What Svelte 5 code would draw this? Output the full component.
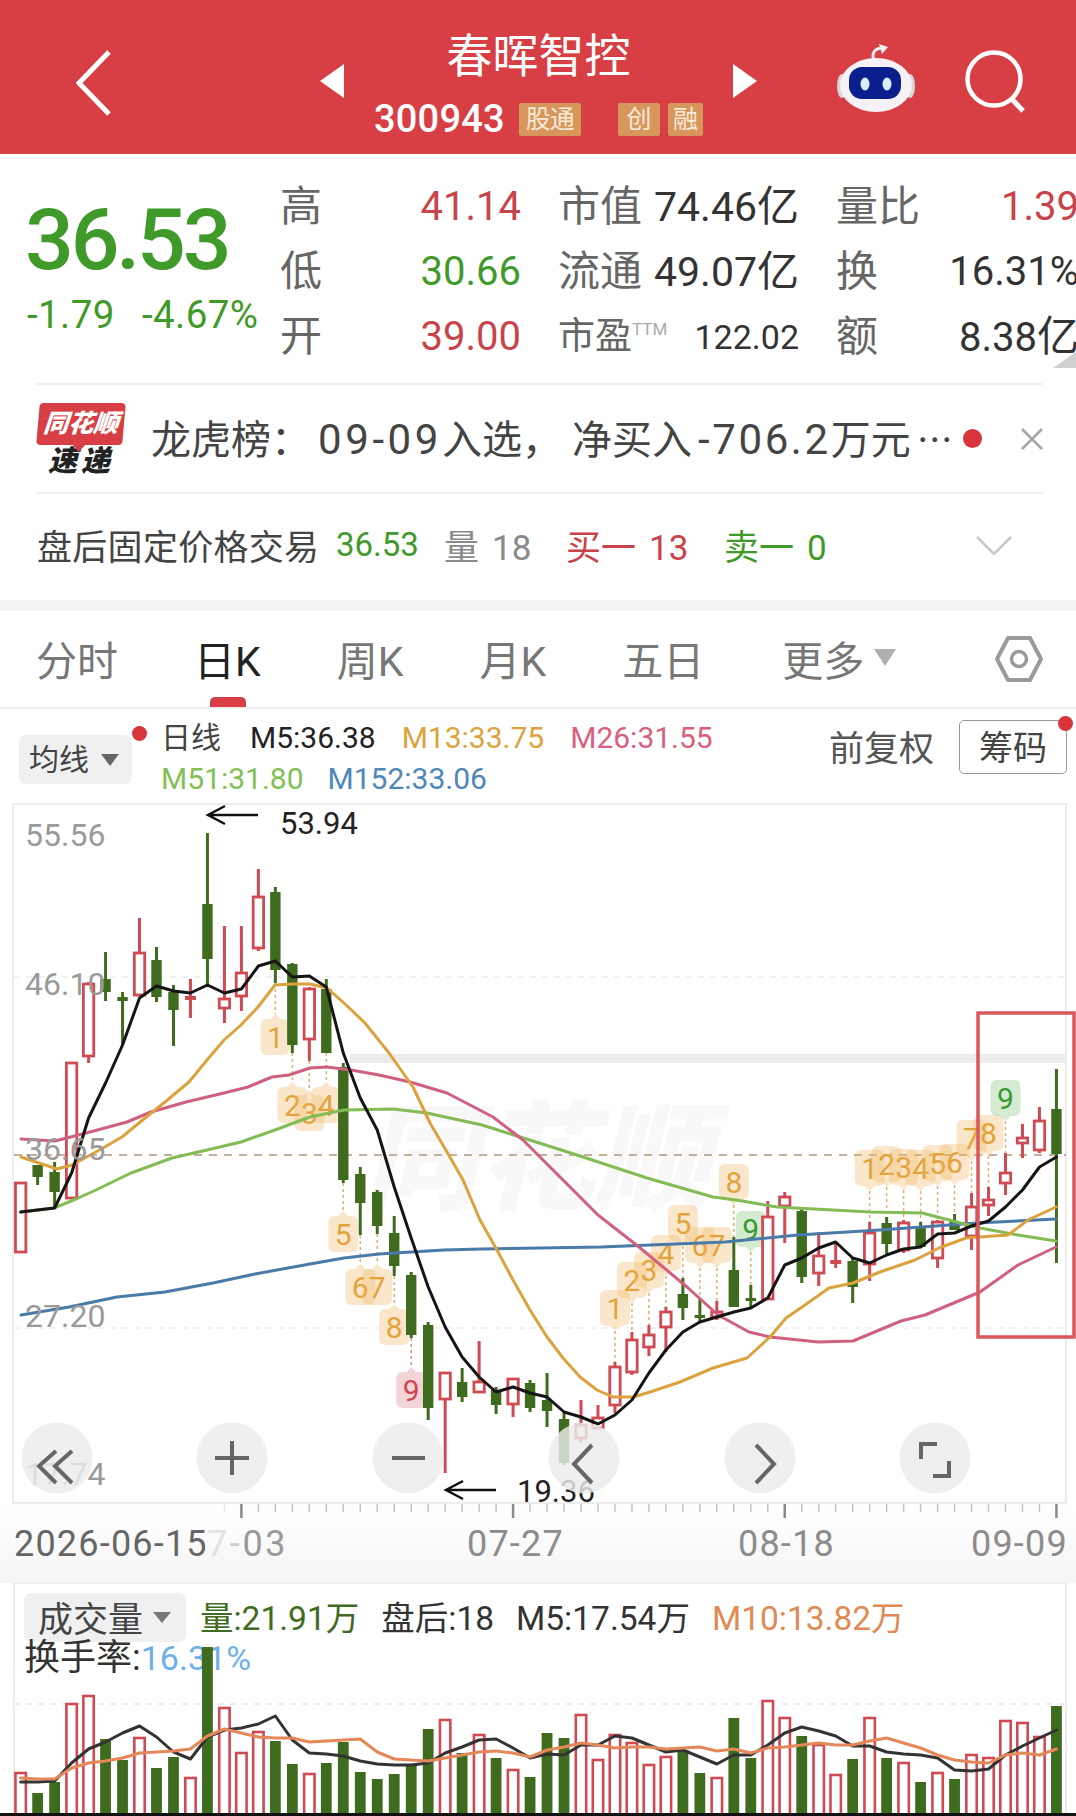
<script>
  const X = (i) => 20.66 + 16.98 * i;
  const RED = '#cf4a52';
  const GREEN = '#3f6b1f';

  // [type, high, bodyTop, bodyBottom, low]
  const candles = [
    ['r',1183,1183,1252,1252],['g',1165,1165,1177,1185],['g',1162,1172,1192,1208],['r',1063,1063,1198,1198],
    ['r',982,984,1056,1063],['g',952,979,992,1001],['g',992,997,1001,1045],['r',918,953,995,995],
    ['g',947,960,997,1002],['g',985,992,1010,1046],['r',979,997,999,1018],['g',833,904,959,985],
    ['r',926,999,1008,1023],['r',926,973,996,1011],['r',869,897,948,951],['g',887,892,970,983],
    ['g',963,964,1045,1053],['r',987,989,1039,1061],['g',979,989,1053,1053],['g',1063,1067,1180,1183],
    ['g',1167,1174,1203,1235],['g',1190,1192,1226,1234],['g',1216,1233,1266,1276],['g',1272,1275,1335,1338],
    ['g',1322,1325,1408,1420],['r',1373,1373,1399,1473],['g',1368,1382,1397,1402],['r',1341,1382,1392,1392],
    ['g',1387,1390,1405,1414],['r',1378,1379,1404,1417],['g',1380,1383,1408,1412],['g',1373,1400,1411,1427],
    ['g',1413,1419,1463,1465],['r',1400,1425,1438,1443],['r',1405,1418,1428,1428],['r',1362,1367,1405,1413],
    ['r',1332,1340,1372,1375],['r',1325,1335,1347,1356],['r',1307,1312,1327,1352],['g',1278,1294,1308,1320],
    ['g',1298,1315,1317,1323],['r',1301,1312,1317,1320],['g',1237,1270,1307,1307],['g',1285,1298,1300,1307],
    ['r',1201,1217,1299,1299],['r',1192,1197,1206,1243],['g',1209,1211,1277,1283],['r',1232,1256,1273,1286],
    ['r',1242,1261,1263,1268],['g',1258,1261,1287,1303],['r',1222,1233,1264,1281],['g',1217,1223,1244,1254],
    ['r',1220,1223,1250,1253],['g',1222,1228,1247,1247],['r',1220,1222,1258,1268],['g',1214,1222,1230,1230],
    ['r',1193,1207,1236,1250],['r',1187,1200,1205,1216],['r',1153,1173,1183,1195],['r',1124,1138,1143,1158],
    ['r',1107,1121,1150,1153],['g',1069,1109,1154,1263],
  ];

  const ma5 = [1212,1210,1208,1173,1118,1083,1045,998,986,991,993,985,993,989,966,961,977,976,987,1053,1098,1130,1187,1238,1287,1327,1357,1377,1392,1387,1393,1397,1412,1417,1424,1415,1400,1373,1350,1332,1322,1317,1312,1308,1298,1265,1258,1248,1242,1258,1263,1255,1249,1247,1234,1233,1226,1221,1207,1190,1167,1157]
    .map((y, i) => `${X(i)},${y}`).join(' ');
  const m13 = '21,1157 57,1169 72,1165 103,1148 122,1137 145,1118 165,1102 189,1082 207,1060 224,1040 241,1025 258,1007 275,985 293,984 310,984 327,988 344,1003 365,1023 389,1053 413,1087 430,1123 447,1152 463,1180 480,1220 497,1250 513,1280 530,1310 547,1337 563,1358 580,1377 597,1390 613,1397 633,1397 647,1393 680,1382 713,1368 747,1358 770,1337 786,1318 805,1305 829,1288 853,1283 880,1272 915,1260 939,1248 966,1238 1008,1235 1028,1220 1056,1207';
  const m26 = '21,1139 55,1141 90,1132 127,1122 151,1112 186,1102 224,1093 248,1087 272,1077 289,1075 310,1068 327,1067 351,1070 379,1075 410,1082 447,1093 493,1117 523,1140 560,1177 598,1215 639,1247 687,1287 718,1315 749,1332 770,1337 818,1342 853,1341 901,1321 925,1315 980,1292 1018,1265 1056,1247';
  const m51 = '21,1212 54,1208 76,1199 96,1190 131,1173 172,1158 207,1150 241,1142 275,1130 310,1117 344,1110 393,1109 427,1113 482,1125 536,1142 577,1155 647,1178 713,1197 736,1200 777,1207 870,1212 922,1213 949,1220 980,1228 1018,1235 1056,1241';
  const m152 = '21,1315 69,1307 117,1297 165,1292 213,1283 255,1274 310,1264 344,1258 379,1254 444,1250 482,1249 540,1248 601,1247 725,1242 798,1235 880,1230 977,1223 1056,1219';

  // [candle index, label, tag centre y, kind, above] - kind: o orange, p red, t green; above = tip points down
  const tags = [
    [15,'1',1037,'o',false],[16,'2',1105,'o',false],[17,'3',1113,'o',false],[18,'4',1105,'o',false],
    [19,'5',1234,'o',false],[20,'6',1287,'o',false],[21,'7',1287,'o',false],[22,'8',1327,'o',false],[23,'9',1390,'p',false],
    [35,'1',1308,'o',true],[36,'2',1280,'o',true],[37,'3',1270,'o',true],[38,'4',1253,'o',true],[39,'5',1223,'o',true],
    [40,'6',1245,'o',true],[41,'7',1245,'o',true],[42,'8',1182,'o',true],[43,'9',1229,'t',true],
    [50,'1',1168,'o',true],[51,'2',1164,'o',true],[52,'3',1167,'o',true],[53,'4',1168,'o',true],[54,'5',1163,'o',true],
    [55,'6',1162,'o',true],[56,'7',1138,'o',true],[57,'8',1133,'o',true],[58,'9',1098,'t',true],
  ];

  const tagFill = { o: '#f0b45c', p: '#dc7c84', t: '#7cc070' };
  const tagText = { o: '#e3a33c', p: '#d0454e', t: '#3a9a32' };

  const tagPath = (x, cy, above) => {
    const l = x - 15, r = x + 15, t = cy - 18, b = cy + 18, c = 7;
    if (above) {
      return `M${l + c} ${t}H${r - c}Q${r} ${t} ${r} ${t + c}V${b - c}Q${r} ${b} ${r - c} ${b}H${x + 5}L${x} ${b + 5}L${x - 5} ${b}H${l + c}Q${l} ${b} ${l} ${b - c}V${t + c}Q${l} ${t} ${l + c} ${t}Z`;
    }
    return `M${l + c} ${t}H${x - 5}L${x} ${t - 5}L${x + 5} ${t}H${r - c}Q${r} ${t} ${r} ${t + c}V${b - c}Q${r} ${b} ${r - c} ${b}H${l + c}Q${l} ${b} ${l} ${b - c}V${t + c}Q${l} ${t} ${l + c} ${t}Z`;
  };

  const ticks = [];
  for (let i = 12; i < 62; i++) ticks.push(i);

  const vols = [1773,1793,1782,1704,1696,1739,1760,1738,1768,1757,1778,1647,1708,1753,1732,1741,1764,1774,1763,1742,1772,1779,1774,1765,1729,1720,1753,1735,1758,1770,1777,1733,1738,1715,1760,1735,1743,1765,1757,1750,1773,1778,1718,1758,1701,1718,1736,1745,1775,1759,1718,1758,1763,1782,1773,1779,1755,1758,1721,1723,1737,1706];
  // colour of each volume bar, read off the reference
  const volRed = new Set([0,3,4,7,10,12,13,14,17,25,27,29,33,34,35,36,37,38,41,44,45,47,48,50,52,54,56,57,58,59,60]);

  const volM5 = [1782,1782,1781,1763,1749,1742,1733,1726,1737,1752,1759,1737,1730,1728,1724,1716,1740,1753,1754,1756,1761,1764,1765,1765,1763,1753,1747,1740,1739,1748,1758,1754,1755,1745,1745,1736,1738,1745,1752,1750,1757,1764,1755,1755,1745,1733,1727,1731,1736,1746,1746,1752,1754,1755,1758,1770,1771,1769,1755,1746,1738,1730]
    .map((y, i) => `${X(i)},${y}`).join(' ');
  const volM10 = [1778,1779,1779,1768,1763,1761,1758,1753,1752,1751,1749,1736,1729,1733,1737,1738,1738,1742,1741,1740,1739,1752,1759,1760,1761,1758,1755,1752,1751,1753,1757,1750,1747,1743,1745,1748,1747,1747,1749,1748,1747,1751,1749,1753,1748,1747,1745,1743,1745,1745,1741,1738,1743,1748,1755,1760,1762,1763,1755,1753,1755,1749]
    .map((y, i) => `${X(i)},${y}`).join(' ');

  const rows = [
    { k: '高', v: '41.14', c: 'red', k2: '市值', v2: '74.46', u2: '亿', k3: '量比', v3: '1.39', c3: 'red' },
    { k: '低', v: '30.66', c: 'green', k2: '流通', v2: '49.07', u2: '亿', k3: '换', v3: '16.31%', c3: 'dark' },
  ];
</script>

<div class="page">
  <header class="top">
    <div class="top-left">
      <svg width="36" height="66" viewBox="0 0 36 66"><path d="M33 2 3 33l30 31" fill="none" stroke="#fff" stroke-width="5"/></svg>
    </div>
    <div class="top-mid">
      <span class="tri tri-l"></span>
      <div class="titles">
        <div class="name">春晖智控</div>
        <div class="code">
          <span class="num">300943</span>
          <span class="badge wide">股通</span>
          <span class="badge b-chuang">创</span>
          <span class="badge b-rong">融</span>
        </div>
      </div>
      <span class="tri tri-r"></span>
    </div>
    <div class="top-right">
      <svg class="robot" width="78" height="70" viewBox="0 0 78 70">
        <path d="M37 17c-3-7 1-12 9-12" fill="none" stroke="#f3eeee" stroke-width="3"/>
        <path d="M42 1l9 3-6 7z" fill="#f3eeee"/>
        <ellipse cx="5" cy="43" rx="5" ry="12" fill="#d9d6da"/>
        <ellipse cx="73" cy="43" rx="5" ry="12" fill="#d9d6da"/>
        <ellipse cx="39" cy="42" rx="36" ry="27" fill="#f4f2f5"/>
        <rect x="12" y="24" width="52" height="32" rx="13" fill="#0a1f8c"/>
        <ellipse cx="28" cy="41" rx="4.5" ry="6.5" fill="#d8ecfb"/>
        <ellipse cx="50" cy="41" rx="4.5" ry="6.5" fill="#d8ecfb"/>
      </svg>
      <svg width="62" height="64" viewBox="0 0 62 64">
        <circle cx="29" cy="29" r="26.5" fill="none" stroke="#fff" stroke-width="4.5"/>
        <path d="M46 48l12 13" stroke="#fff" stroke-width="5" fill="none"/>
      </svg>
    </div>
  </header>

  <section class="quote">
    <div class="price">
      <div class="big">36.53</div>
      <div class="change"><span class="chg">-1.79</span><span>-4.67%</span></div>
    </div>
    <div class="table">
      {#each rows as r}
        <div class="cell"><span class="k">{r.k}</span><span class="v {r.c}">{r.v}</span></div>
        <div class="cell mid"><span class="k">{r.k2}</span><span class="v dark">{r.v2}<i>{r.u2}</i></span></div>
        <div class="cell"><span class="k">{r.k3}</span><span class="v {r.c3}">{r.v3}</span></div>
      {/each}
      <div class="cell"><span class="k">开</span><span class="v red">39.00</span></div>
      <div class="cell mid"><span class="k small">市盈<sup>TTM</sup></span><span class="v dark pe">122.02</span></div>
      <div class="cell"><span class="k">额</span><span class="v dark">8.38<i>亿</i></span></div>
    </div>
    <span class="corner"></span>
  </section>

  <section class="news">
    <div class="logo">
      <div class="bubble">同花顺</div>
      <div class="express">速递</div>
    </div>
    <div class="headline">龙虎榜：<span class="d d1">09-09</span>入选，<span class="next">净买入</span><span class="d d2">-706.2</span>万元<span class="dots">…</span></div>
    <span class="news-dot"></span>
    <svg class="close" width="24" height="22" viewBox="0 0 24 22"><path d="M2 1l20 20M22 1 2 21" stroke="#a5a5a5" stroke-width="2.5" fill="none"/></svg>
  </section>

  <section class="after">
    <span class="after-title">盘后固定价格交易</span>
    <span class="a-green a-price">36.53</span>
    <span class="a-gray a-qty">量<b>18</b></span>
    <span class="a-red a-buy">买一<b>13</b></span>
    <span class="a-green a-sell">卖一<b>0</b></span>
    <svg class="chev" width="36" height="20" viewBox="0 0 36 20"><path d="M1 1l17 17L35 1" fill="none" stroke="#c8c8c8" stroke-width="2.5"/></svg>
  </section>

  <div class="sep"></div>

  <nav class="tabs">
    <span class="tab">分时</span>
    <span class="tab active">日K</span>
    <span class="tab">周K</span>
    <span class="tab">月K</span>
    <span class="tab">五日</span>
    <span class="tab more">更多<em></em></span>
    <svg class="hex" width="50" height="48" viewBox="0 0 50 48">
      <path d="M14 3h22l11 21-11 21H14L3 24z" fill="none" stroke="#9a9a9a" stroke-width="4" stroke-linejoin="round"/>
      <circle cx="25" cy="24" r="7.5" fill="none" stroke="#9a9a9a" stroke-width="3.5"/>
    </svg>
  </nav>

  <section class="legend">
    <div class="ma-btn">均线<em></em></div>
    <span class="legend-dot"></span>
    <div class="ma-lines">
      <div class="ma-row">
        <span class="ma-name">日线</span>
        <span class="c-k">M5:36.38</span>
        <span class="c-o">M13:33.75</span>
        <span class="c-p">M26:31.55</span>
      </div>
      <div class="ma-row row-two">
        <span class="c-g">M51:31.80</span>
        <span class="c-b">M152:33.06</span>
      </div>
    </div>
    <span class="adjust">前复权</span>
    <div class="chips">筹码<span class="chips-dot"></span></div>
  </section>

  <svg class="chart" width="1076" height="780" viewBox="0 803 1076 780">
    <defs>
      <linearGradient id="axisBg" x1="0" y1="0" x2="0" y2="1">
        <stop offset="0" stop-color="#fff"/>
        <stop offset="1" stop-color="#f5f5f5"/>
      </linearGradient>
    </defs>

    <rect x="0" y="1503" width="1076" height="80" fill="url(#axisBg)"/>
    <rect x="13" y="804" width="1053" height="699" fill="#fff" stroke="#ececec" stroke-width="2"/>

    <rect x="350" y="1054" width="716" height="9" fill="#ececec"/>
    <text class="mark" x="362" y="1200">同花顺</text>

    <path d="M14 977H1066M14 1328H1066" stroke="#eeeeee" stroke-width="1.5" stroke-dasharray="6 6"/>
    <path d="M14 1155H1066" stroke="#c4b09a" stroke-width="2" stroke-dasharray="8 7"/>

    {#each tags as [i, label, cy, kind, above]}
      <path d={above ? `M${X(i)} ${cy + 23}V${candles[i][1]}` : `M${X(i)} ${candles[i][4]}V${cy - 23}`}
        stroke={kind === 'p' ? '#d89098' : '#dcb272'} stroke-width="1.5" stroke-dasharray="3 3"/>
      <path d={tagPath(X(i), cy, above)} fill={tagFill[kind]} opacity="0.32"/>
      <text class="tag" x={X(i)} y={cy + 11} fill={tagText[kind]}>{label}</text>
    {/each}

    {#each candles as [type, high, top, bottom, low], i}
      {#if type === 'g'}
        <path d="M{X(i)} {high}V{low}" stroke={GREEN} stroke-width="3"/>
        <rect x={X(i) - 5.2} y={top} width="10.4" height={Math.max(bottom - top, 3)} fill={GREEN}/>
      {:else}
        <path d="M{X(i)} {high}V{top}M{X(i)} {bottom}V{low}" stroke={RED} stroke-width="3"/>
        {#if bottom - top < 5}
          <rect x={X(i) - 5.5} y={top - 1} width="11" height="4" fill={RED}/>
        {:else}
          <rect x={X(i) - 5.2} y={top} width="10.4" height={bottom - top} fill="#fff" stroke={RED} stroke-width="2.8"/>
        {/if}
      {/if}
    {/each}

    <polyline points={m152} class="ma" stroke="#4a7aa8"/>
    <polyline points={m51} class="ma" stroke="#83bb55"/>
    <polyline points={m26} class="ma" stroke="#d0607f"/>
    <polyline points={m13} class="ma" stroke="#dca23d"/>
    <polyline points={ma5} class="ma" stroke="#151515"/>

    <text class="axis" x="25" y="846">55.56</text>
    <text class="axis" x="25" y="995">46.10</text>
    <text class="axis" x="25" y="1160">36.65</text>
    <text class="axis" x="25" y="1327">27.20</text>
    <text class="axis" x="25" y="1485">17.74</text>

    <path d="M258 815H208M225 806 208 815 225 824" fill="none" stroke="#111" stroke-width="2.5"/>
    <text class="extreme" x="280" y="834">53.94</text>
    <path d="M496 1490H446M463 1481 446 1490 463 1499" fill="none" stroke="#111" stroke-width="2.5"/>
    <text class="extreme" x="517" y="1502">19.36</text>

    <path d="M978 1013H1074V1337H978Z" fill="none" stroke="#d9575e" stroke-width="3.5"/>

    {#each [57, 232, 408, 584, 760, 935] as cx}
      <circle {cx} cy="1458" r="35.5" fill="#ebebeb" opacity="0.82"/>
    {/each}
    <g fill="none" stroke="#666" stroke-width="4">
      <path d="M56 1451 39 1466 56 1483M72 1451 55 1466 72 1483"/>
      <path d="M232 1441V1475M215 1458H249"/>
      <path d="M392 1458H425"/>
      <path d="M592 1445 574 1464 592 1483"/>
      <path d="M756 1445 774 1464 756 1483"/>
      <path d="M921 1459V1444H937M949 1461V1476H933"/>
    </g>

    {#each ticks as i}
      <path d="M{X(i)} 1504V{(i - 13) % 16 === 0 ? 1518 : 1512}"
        stroke={(i - 13) % 16 === 0 ? '#8a8a8a' : i < 13 ? '#e8e8e8' : '#c4c4c4'}
        stroke-width={(i - 13) % 16 === 0 ? 2.5 : 1.5}/>
    {/each}
    <text class="date" x="14" y="1556" fill="#666">2026-06-15</text>
    <text class="date faded" x="207" y="1556"><tspan fill="#e2e2e2">7</tspan><tspan fill="#ccc">-</tspan><tspan fill="#999">03</tspan></text>
    <text class="date" x="467" y="1556" fill="#8c8c8c">07-27</text>
    <text class="date" x="738" y="1556" fill="#8c8c8c">08-18</text>
    <text class="date" x="971" y="1556" fill="#8c8c8c">09-09</text>
  </svg>

  <section class="vol">
    <div class="vol-row">
      <div class="vol-btn"><span>成交量</span><em></em></div>
      <span class="v-green">量:21.91万</span>
      <span class="v-dark">盘后:18</span>
      <span class="v-dark">M5:17.54万</span>
      <span class="v-orange">M10:13.82万</span>
    </div>
    <div class="turnover">换手率:<span>16.31%</span></div>
    <svg class="vol-chart" width="1076" height="230" viewBox="0 1583 1076 230">
      <path d="M13 1583H1067M14 1583V1813M1066 1583V1813" fill="none" stroke="#ececec" stroke-width="2"/>
      <path d="M14 1704H1066" stroke="#e6e6e6" stroke-width="1.5" stroke-dasharray="6 6"/>
      {#each vols as y, i}
        {#if volRed.has(i)}
          <rect x={X(i) - 5.2} {y} width="10.4" height={1816 - y} fill="#fff" stroke={RED} stroke-width="2.6"/>
        {:else}
          <rect x={X(i) - 5.4} {y} width="10.8" height={1813 - y} fill={GREEN}/>
        {/if}
      {/each}
      <polyline points={volM5} class="ma" stroke="#333" stroke-width="2.5"/>
      <polyline points={volM10} class="ma" stroke="#e4885a" stroke-width="2.5"/>
    </svg>
  </section>
  <div class="base"></div>
</div>

<style>
  :global(body) {
    margin: 0;
    background: #fff;
  }

  .page {
    width: 1076px;
    height: 1816px;
    overflow: hidden;
    position: relative;
    background: #fff;
    font-family: Roboto, "Noto Sans CJK SC", sans-serif;
    color: #333;
  }

  /* header */
  .top {
    height: 154px;
    background: #d83f45;
    display: grid;
    grid-template-columns: 1fr auto 1fr;
    align-items: center;
    color: #fff;
  }

  .top-left {
    padding: 0 0 0 76px;
    height: 66px;
    margin-top: 12px;
  }

  .top-mid {
    display: flex;
    align-items: center;
    gap: 30px;
    margin-left: 1px;
  }

  .tri {
    width: 0;
    height: 0;
    border-top: 17px solid transparent;
    border-bottom: 17px solid transparent;
    margin-top: 8px;
  }

  .tri-l {
    border-right: 24px solid #fff;
  }

  .tri-r {
    border-left: 24px solid #fff;
  }

  .titles {
    width: 329px;
    text-align: center;
  }

  .name {
    font-size: 46px;
    line-height: 56px;
    margin-top: 11px;
  }

  .code {
    display: flex;
    align-items: center;
    height: 36px;
    margin-top: 17px;
    font-size: 38px;
    font-weight: 500;
  }

  .code .num {
    margin-right: 14px;
    letter-spacing: 0.2px;
  }

  .badge {
    background: #d7965c;
    color: #f7ead9;
    font-size: 25px;
    font-weight: 400;
    height: 33px;
    line-height: 33px;
    width: 44px;
    text-align: center;
    border-radius: 2px;
  }

  .wide {
    width: 64px;
    letter-spacing: -1px;
  }

  .b-chuang {
    margin-left: 37px;
  }

  .b-rong {
    margin-left: 8px;
    width: 36px;
  }

  .top-right {
    display: flex;
    align-items: center;
    padding-left: 80px;
    gap: 50px;
    margin-top: 10px;
  }

  .robot {
    margin-top: -8px;
  }

  /* quote */
  .quote {
    display: flex;
    height: 229px;
    padding-left: 27px;
    position: relative;
  }

  .price {
    width: 253px;
    padding-top: 41px;
    box-sizing: border-box;
    flex: none;
  }

  .big {
    font-size: 86px;
    line-height: 90px;
    font-weight: 500;
    color: #3f9a2a;
    letter-spacing: -3.2px;
    margin-left: -2px;
  }

  .change {
    display: flex;
    font-size: 38.5px;
    line-height: 40px;
    color: #3f9a2a;
    margin-top: 10px;
    white-space: nowrap;
    letter-spacing: 0.4px;
  }

  .chg {
    width: 115px;
    flex: none;
  }

  .table {
    display: grid;
    grid-template-columns: 241px 241px 243px;
    column-gap: 37px;
    grid-auto-rows: 65px;
    padding-top: 20px;
  }

  .cell {
    display: flex;
    justify-content: space-between;
    align-items: center;
    white-space: nowrap;
  }

  .mid {
    justify-content: flex-start;
  }

  .k {
    font-size: 42px;
    color: #666;
    line-height: 1;
  }

  .k.small {
    font-size: 37px;
    width: 138px;
  }

  .k sup {
    font-size: 17px;
    color: #aaa;
    vertical-align: 14px;
    line-height: 0;
  }

  .v {
    font-size: 40px;
    line-height: 1;
  }

  .mid .k {
    margin-right: 12px;
  }

  .mid .v {
    font-size: 41px;
  }

  .mid .k.small {
    margin-right: 0;
  }

  .v i {
    font-style: normal;
    font-size: 42px;
  }

  .mid .v.pe {
    font-size: 34px;
  }

  .red {
    color: #c8434a;
  }

  .green {
    color: #3f9a2a;
  }

  .dark {
    color: #333;
  }

  .corner {
    position: absolute;
    right: 0;
    top: 198px;
    width: 0;
    height: 0;
    border-left: 23px solid transparent;
    border-bottom: 16px solid #d0d0d0;
  }

  /* news */
  .news {
    height: 107px;
    margin: 0 33px 0 36px;
    border-top: 2px solid #f0f0f0;
    border-bottom: 2px solid #f0f0f0;
    display: flex;
    align-items: center;
    box-sizing: content-box;
  }

  .logo {
    width: 92px;
    margin-left: 2px;
    flex: none;
    text-align: center;
    margin-top: 2px;
  }

  .bubble {
    background: #d83f45;
    color: #fff;
    font-size: 25px;
    line-height: 42px;
    height: 42px;
    width: 86px;
    font-weight: 900;
    font-style: italic;
    border-radius: 4px;
    transform: skewX(-5deg);
    position: relative;
    white-space: nowrap;
  }

  .bubble::after {
    content: "";
    position: absolute;
    left: 36px;
    bottom: -7px;
    border-left: 7px solid transparent;
    border-right: 7px solid transparent;
    border-top: 8px solid #d83f45;
  }

  .express {
    font-size: 29px;
    line-height: 30px;
    font-weight: 900;
    font-style: italic;
    color: #222;
    letter-spacing: 4px;
    margin-top: 1px;
    width: 86px;
    white-space: nowrap;
  }

  .headline {
    font-size: 40px;
    color: #444;
    margin-left: 21px;
    white-space: nowrap;
    width: 813px;
    flex: none;
    line-height: 1;
    margin-top: 2px;
  }

  .headline .d {
    font-size: 42px;
  }

  .d1 {
    letter-spacing: 3.6px;
    margin-left: 7px;
  }

  .next {
    margin-left: 10px;
  }

  .d2 {
    letter-spacing: 2.6px;
    margin-left: 6px;
  }

  .dots {
    font-family: "Noto Sans CJK SC", sans-serif;
    font-size: 36px;
    margin-left: 6px;
  }

  .news-dot {
    width: 19px;
    height: 19px;
    border-radius: 50%;
    background: #d8343c;
    flex: none;
    margin-left: -1px;
  }

  .close {
    margin-left: auto;
    margin-right: -1px;
  }

  /* after hours */
  .after {
    height: 106px;
    display: flex;
    align-items: center;
    padding-left: 37px;
    padding-bottom: 6px;
    box-sizing: border-box;
    font-size: 35px;
    white-space: nowrap;
  }

  .after b {
    font-weight: 400;
    margin-left: 13px;
  }

  .after-title {
    color: #444;
    width: 299px;
    flex: none;
    letter-spacing: 0.3px;
  }

  .a-green {
    color: #3f9a2a;
  }

  .a-red {
    color: #c8434a;
  }

  .a-gray {
    color: #8a8a8a;
  }

  .a-price {
    width: 108px;
    flex: none;
    font-size: 33px;
  }

  .a-qty {
    width: 122px;
    flex: none;
  }

  .a-buy {
    width: 158px;
    flex: none;
  }

  .chev {
    margin-left: auto;
    margin-right: 64px;
    margin-top: 3px;
  }

  .sep {
    height: 11px;
    background: #f3f3f3;
  }

  /* tabs */
  .tabs {
    height: 96px;
    border-bottom: 2px solid #f0f0f0;
    display: flex;
    align-items: center;
    padding-left: 36px;
    gap: 76px;
    font-size: 41px;
    color: #777;
    position: relative;
  }

  .tab {
    position: relative;
    height: 96px;
    line-height: 103px;
    white-space: nowrap;
  }

  .active {
    color: #222;
  }

  .active::after {
    content: "";
    position: absolute;
    left: 16px;
    width: 36px;
    height: 10px;
    bottom: 0;
    background: #d83f45;
    border-radius: 5px 5px 0 0;
  }

  .more {
    display: flex;
    align-items: center;
    padding-top: 7px;
    box-sizing: border-box;
    margin-left: 2px;
  }

  .more em {
    width: 0;
    height: 0;
    margin-left: 10px;
    margin-top: -10px;
    border-left: 11px solid transparent;
    border-right: 11px solid transparent;
    border-top: 17px solid #b0b0b0;
  }

  .hex {
    margin-left: auto;
    margin-right: 32px;
  }

  /* legend */
  .legend {
    height: 94px;
    display: flex;
    align-items: flex-start;
    font-size: 30px;
    white-space: nowrap;
  }

  .ma-btn {
    margin: 26px 0 0 19px;
    width: 113px;
    height: 49px;
    line-height: 49px;
    background: #f0f0f0;
    border-radius: 7px;
    padding-left: 10px;
    box-sizing: border-box;
    display: flex;
    align-items: center;
    color: #444;
  }

  .ma-btn em {
    width: 0;
    height: 0;
    margin-left: 12px;
    border-left: 9px solid transparent;
    border-right: 9px solid transparent;
    border-top: 12px solid #666;
  }

  .legend-dot {
    width: 15px;
    height: 15px;
    border-radius: 50%;
    background: #d8343c;
    margin: 17px 0 0 0;
    flex: none;
  }

  .ma-lines {
    margin-left: 14px;
    margin-top: 8px;
  }

  .ma-row {
    display: flex;
    gap: 26px;
    height: 41px;
    line-height: 41px;
  }

  .row-two {
    gap: 24px;
  }

  .ma-name {
    color: #444;
    margin-right: 3px;
  }

  .c-k {
    color: #222;
  }

  .c-o {
    color: #dca23d;
  }

  .c-p {
    color: #d8607e;
  }

  .c-g {
    color: #82bf55;
  }

  .c-b {
    color: #4f87b8;
  }

  .adjust {
    font-size: 35px;
    line-height: 44px;
    margin: 19px 0 0 auto;
    color: #555;
  }

  .chips {
    width: 108px;
    height: 54px;
    margin: 11px 9px 0 25px;
    box-sizing: border-box;
    border: 1.5px solid #999;
    border-radius: 5px;
    text-align: center;
    line-height: 54px;
    font-size: 34px;
    color: #444;
    position: relative;
  }

  .chips-dot {
    position: absolute;
    right: -7px;
    top: -5px;
    width: 15px;
    height: 15px;
    border-radius: 50%;
    background: #d8343c;
  }

  /* charts */
  .chart {
    display: block;
  }

  .ma {
    fill: none;
    stroke-width: 3;
    stroke-linejoin: round;
    stroke-linecap: round;
  }

  .mark {
    font-size: 116px;
    font-weight: 900;
    font-style: italic;
    fill: #f8f8f8;
  }

  .tag {
    font-size: 30px;
    text-anchor: middle;
  }

  .axis {
    font-size: 32px;
    fill: #9a9a9a;
  }

  .extreme {
    font-size: 31px;
    fill: #222;
  }

  .date {
    font-size: 36px;
    letter-spacing: 1.2px;
  }

  .faded {
    letter-spacing: 2.6px;
  }

  /* volume */
  .vol {
    height: 230px;
    position: relative;
    padding: 10px 0 0 24px;
    box-sizing: border-box;
    font-size: 33.5px;
    white-space: nowrap;
  }

  .vol-row {
    display: flex;
    align-items: center;
    height: 49px;
    gap: 22px;
  }

  .vol-row > span {
    padding-bottom: 4px;
  }

  .vol-btn {
    width: 162px;
    height: 49px;
    background: #f0f0f0;
    border-radius: 7px;
    padding-left: 14px;
    box-sizing: border-box;
    display: flex;
    align-items: center;
    color: #444;
    margin-right: -8px;
    font-size: 35px;
  }

  .vol-btn span {
    padding-bottom: 3px;
  }

  .vol-btn em {
    width: 0;
    height: 0;
    margin-left: 10px;
    border-left: 9px solid transparent;
    border-right: 9px solid transparent;
    border-top: 11px solid #777;
  }

  .v-green {
    color: #3f6b22;
  }

  .v-dark {
    color: #333;
  }

  .v-orange {
    color: #e08a55;
  }

  .turnover {
    margin: -2px 0 0 0;
    line-height: 36px;
    font-size: 36px;
    color: #333;
  }

  .turnover span {
    color: #6db0e8;
    font-size: 34px;
  }

  .vol-chart {
    position: absolute;
    left: 0;
    top: 0;
  }

  .base {
    height: 3px;
    background: #111;
  }
</style>
